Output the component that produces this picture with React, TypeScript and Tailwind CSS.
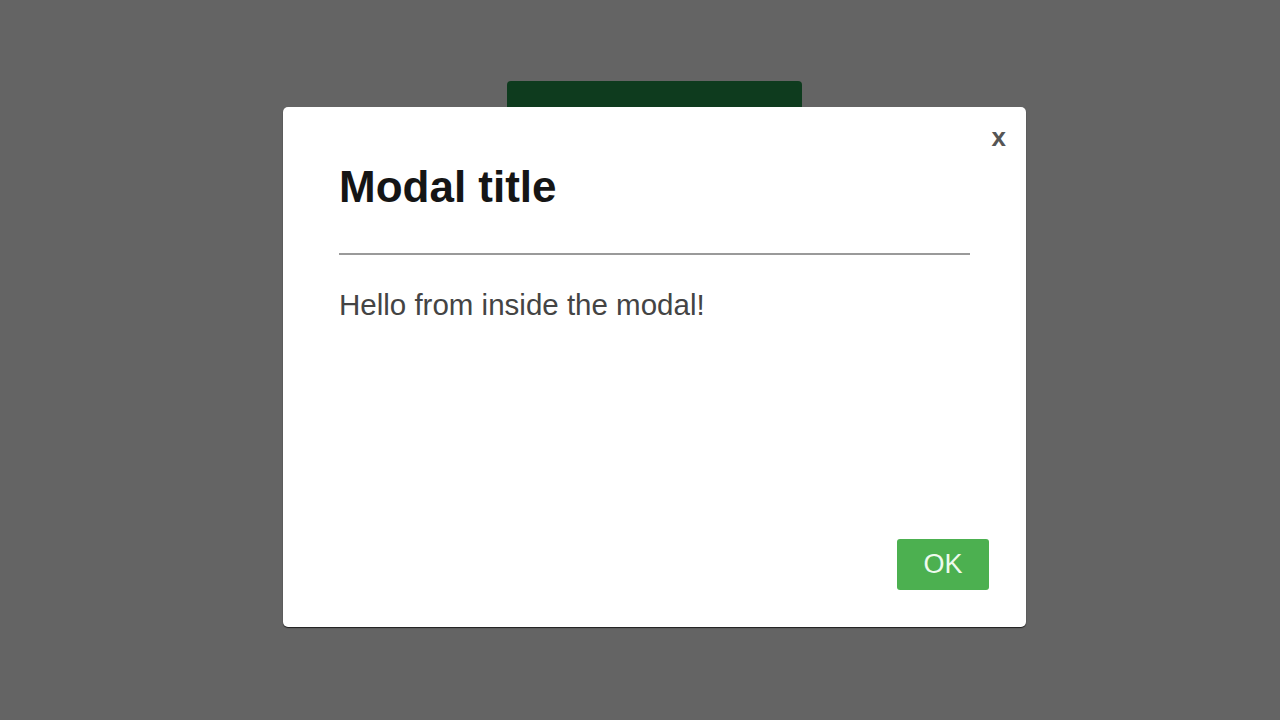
export default function App() {
  return (
    <div
      className="relative h-[720px] w-[1280px] overflow-hidden bg-[#646464]"
      style={{ fontFamily: '"Liberation Sans", Arial, sans-serif' }}
    >
      {/* page behind the overlay */}
      <div className="pl-[507px] pt-[81px]">
        <button className="h-[60px] w-[295px] rounded-[4px] bg-[#0e3b1e]" />
      </div>

      {/* modal */}
      <div className="absolute inset-0 flex items-start">
        <div className="relative ml-[283px] mt-[107px] flex h-[520px] w-[743px] flex-col rounded-[5px] bg-white shadow-[0_1px_1px_rgba(0,0,0,0.7)]">
          <button className="absolute right-[20px] top-[17px] text-[26px] font-bold leading-none text-[#555]">
            x
          </button>
          <div className="px-[56px] pt-[58px]">
            <h2 className="text-[44px] font-bold leading-none text-[#151515]">Modal title</h2>
            <div className="mt-[44px] h-[2px] bg-[#9a9a9a]" />
            <p className="mt-[35px] text-[29.5px] leading-none text-[#444]">Hello from inside the modal!</p>
          </div>
          <div className="mt-auto flex justify-end pb-[37px] pr-[37px]">
            <button className="flex h-[51px] w-[92px] items-center justify-center rounded-[3px] bg-[#4cb050] text-[27px] text-[#eefaee]">
              OK
            </button>
          </div>
        </div>
      </div>
    </div>
  )
}
